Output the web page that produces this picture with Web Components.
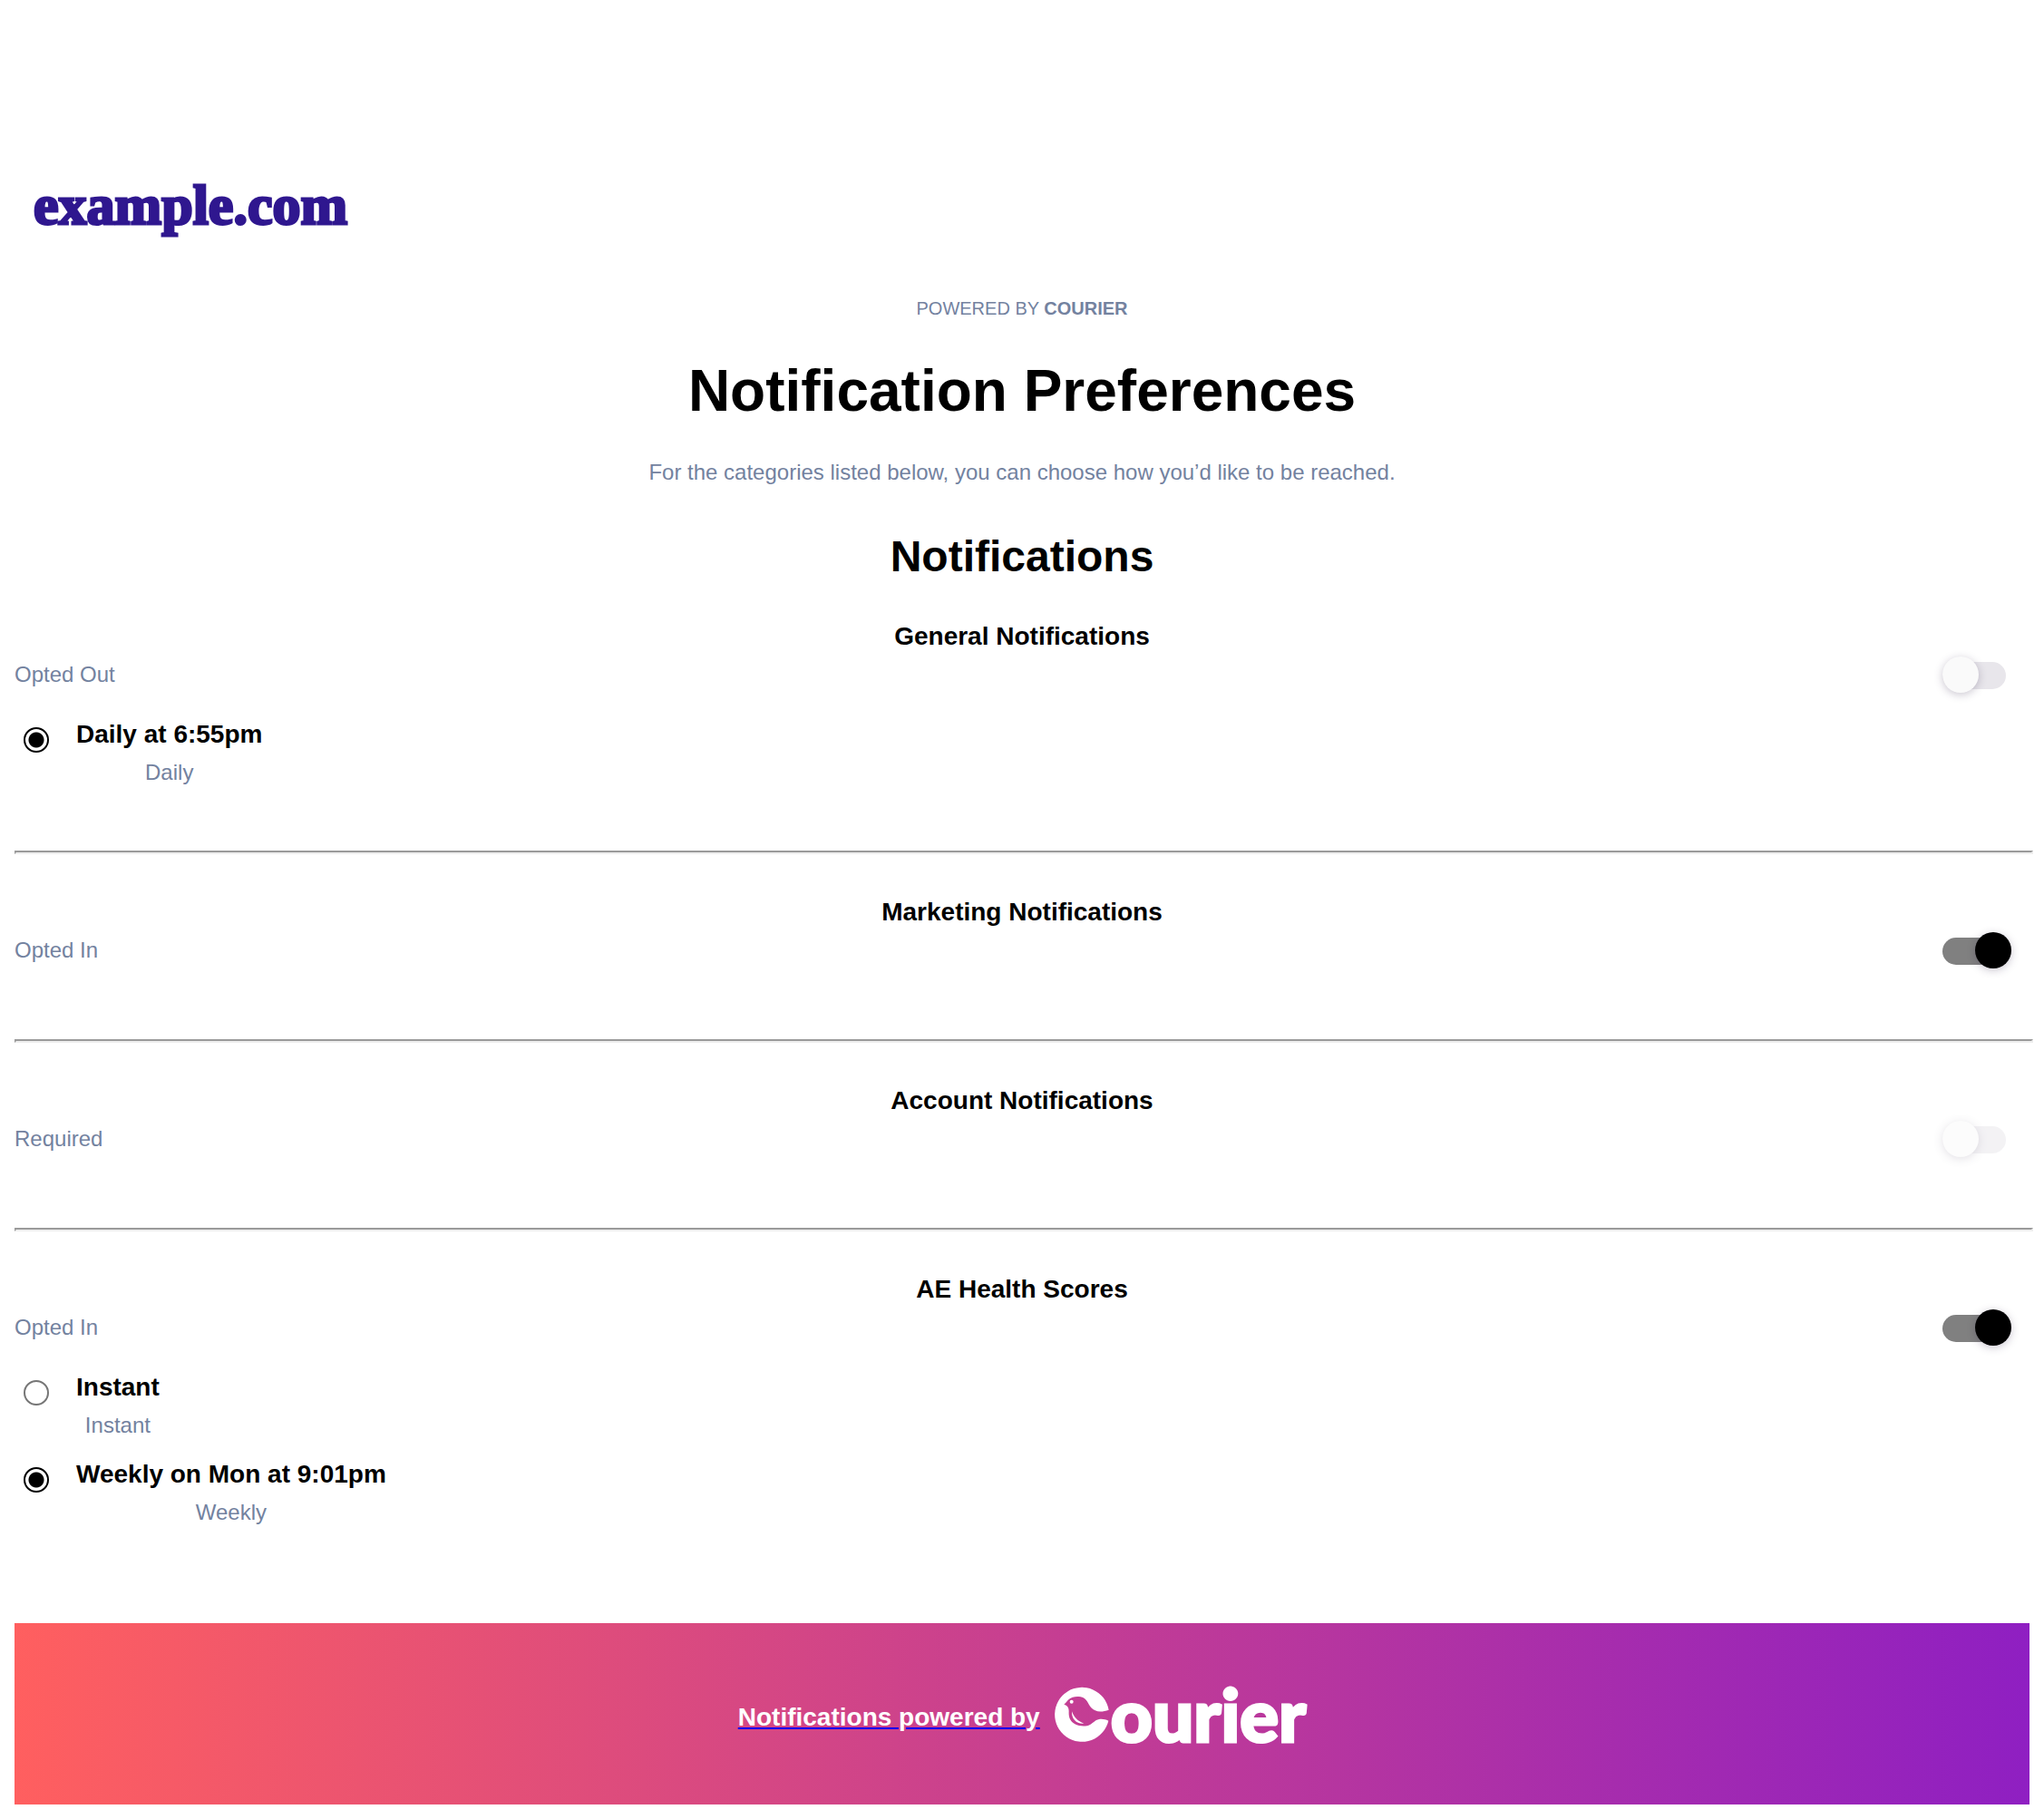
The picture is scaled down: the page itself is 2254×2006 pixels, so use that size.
<!DOCTYPE html>
<html lang="en">
<head>
<meta charset="utf-8">
<meta name="viewport" content="width=device-width, initial-scale=1">
<title>Notification Preferences</title>
<style>
  body { margin: 0; background: #fff; font-family: "Liberation Sans", Arial, sans-serif; }
</style>
</head>
<body>
<preferences-page>
  <brand-logo slot="logo">example.com</brand-logo>
  <preference-section heading="General Notifications" status="Opted Out">
    <preference-option label="Daily at 6:55pm" detail="Daily" checked></preference-option>
  </preference-section>
  <preference-section heading="Marketing Notifications" status="Opted In" on></preference-section>
  <preference-section heading="Account Notifications" status="Required" locked></preference-section>
  <preference-section heading="AE Health Scores" status="Opted In" on>
    <preference-option label="Instant" detail="Instant"></preference-option>
    <preference-option label="Weekly on Mon at 9:01pm" detail="Weekly" checked></preference-option>
  </preference-section>
  <courier-banner slot="footer">Notifications powered by</courier-banner>
</preferences-page>

<script>
const mount = (host, html) => {
  const root = host.attachShadow({ mode: "open" });
  root.innerHTML = html;
  return root;
};

customElements.define("preferences-page", class extends HTMLElement {
  constructor() {
    super();
    mount(this, `
      <style>
        :host { display: block; padding: 192px 16px 16px; --muted: #73829f; }
        header { display: flex; flex-direction: column; align-items: center; text-align: center; }
        p, h1, h2 { margin: 0; }
        .powered { color: var(--muted); font-size: 20px; line-height: 24px; margin-top: 68px; }
        h1 { font-size: 64px; line-height: 72px; margin-top: 43px; }
        .intro { color: var(--muted); font-size: 24px; line-height: 28px; margin-top: 40px; }
        h2 { font-size: 48px; line-height: 56px; margin: 51px 0 44px; }
        footer { margin-top: 36px; }
      </style>
      <slot name="logo"></slot>
      <header>
        <p class="powered">POWERED BY <b>COURIER</b></p>
        <h1>Notification Preferences</h1>
        <p class="intro">For the categories listed below, you can choose how you’d like to be reached.</p>
        <h2>Notifications</h2>
      </header>
      <main><slot></slot></main>
      <footer><slot name="footer"></slot></footer>`);
  }
});

customElements.define("brand-logo", class extends HTMLElement {
  constructor() {
    super();
    mount(this, `
      <style>
        :host { display: block; padding-left: 21px; color: #2f178f;
          font: bold 62px/68px "Liberation Serif", "Times New Roman", serif;
          -webkit-text-stroke: 3px #2f178f; stroke-linejoin: round; }
      </style>
      <slot></slot>`);
  }
});

customElements.define("toggle-switch", class extends HTMLElement {
  constructor() {
    super();
    const root = mount(this, `
      <style>
        :host { display: block; }
        input { appearance: none; display: flex; align-items: center; margin: 0; width: 76px; height: 40px; cursor: pointer; }
        input::before { content: ""; width: 70px; height: 30px; border-radius: 15px; background: #e8e6eb; margin-top: 2px; }
        input::after { content: ""; flex: none; width: 40px; height: 40px; border-radius: 50%; background: #fafafa;
          margin-left: -70px; box-shadow: 0 2px 10px rgba(50, 35, 75, .26); }
        input:checked::before { background: #808080; }
        input:checked::after { background: #000; margin-left: -34px; }
        input:disabled { opacity: .5; cursor: default; }
      </style>
      <input type="checkbox" role="switch">`);
    const input = root.querySelector("input");
    input.checked = this.hasAttribute("on");
    input.disabled = this.hasAttribute("locked");
    input.setAttribute("aria-label", this.getAttribute("label"));
  }
});

customElements.define("preference-option", class extends HTMLElement {
  constructor() {
    super();
    const root = mount(this, `
      <style>
        :host { display: flex; align-items: flex-start; }
        input { appearance: none; box-sizing: border-box; width: 28px; height: 28px; margin: 8px 30px 0 10px;
          border: 2px solid #767676; border-radius: 50%; background: #fff; }
        input:checked { border-color: #000; background: radial-gradient(circle, #000 8px, #fff 9px); }
        label { display: flex; flex-direction: column; gap: 12px; text-align: center; }
        .name { font-size: 28px; line-height: 32px; font-weight: bold; }
        .detail { font-size: 24px; line-height: 28px; color: var(--muted); }
      </style>
      <input type="radio" id="choice">
      <label for="choice"><span class="name"></span><span class="detail"></span></label>`);
    root.querySelector(".name").textContent = this.getAttribute("label");
    root.querySelector(".detail").textContent = this.getAttribute("detail");
    this.input = root.querySelector("input");
    this.input.checked = this.hasAttribute("checked");
    this.input.addEventListener("change", () => {
      for (const other of this.parentElement.querySelectorAll("preference-option"))
        if (other !== this) other.input.checked = false;
    });
  }
});

customElements.define("preference-section", class extends HTMLElement {
  constructor() {
    super();
    const heading = this.getAttribute("heading");
    const flags = ["on", "locked"].filter(f => this.hasAttribute(f)).join(" ");
    mount(this, `
      <style>
        :host { display: block; }
        section { padding-bottom: 72px; }
        h3 { margin: 0 0 6px; font-size: 28px; line-height: 32px; text-align: center; }
        .row { display: flex; align-items: center; justify-content: space-between; height: 40px; margin-bottom: 6px; padding-right: 20px; }
        .status { font-size: 24px; line-height: 28px; color: var(--muted); }
        .options { display: flex; flex-direction: column; }
        ::slotted(preference-option) { margin-top: 24px; }
        hr { width: 100%; margin: 0 0 48px; border: 2px solid; border-color: #9a9a9a #eee #eee #9a9a9a; }
        :host(:nth-last-child(2)) hr { display: none; }
      </style>
      <section>
        <h3>${heading}</h3>
        <div class="row"><span class="status">${this.getAttribute("status")}</span>
          <toggle-switch label="${heading}" ${flags}></toggle-switch></div>
        <div class="options"><slot></slot></div>
      </section>
      <hr>`);
  }
});

customElements.define("courier-banner", class extends HTMLElement {
  constructor() {
    super();
    mount(this, `
      <style>
        :host { display: flex; align-items: center; justify-content: center; height: 200px;
          background: linear-gradient(90deg, #ff5f5f, #8f1fc2); }
        a { display: flex; align-items: center; gap: 16px; color: #00e; text-decoration: none; }
        .text { font-size: 28px; line-height: 32px; font-weight: bold; color: #fff; margin-top: 8px;
          text-decoration: underline 2px #00e; text-underline-offset: 2px; }
        .mark { display: flex; align-items: center; gap: 2px; color: #fff; }
        svg { width: 60px; height: 62px; }
        .word { font: 900 80px/62px Lato, Inter, sans-serif; -webkit-text-stroke: 3px #fff; }
      </style>
      <a href="#courier">
        <span class="text"><slot></slot></span>
        <span class="mark">
          <svg viewBox="94 91 180 186" aria-hidden="true" fill="#fff">
            <path d="M273 171A90 90 0 1 0 272 207C262 202 250 200 241 202C227 205 222 214 211 220C198 227 176 226 161 218C143 208 140 192 141 176C141 165 138 157 125 153C132 148 134 142 141 136C151 127 168 125 180 128C203 133 203 151 215 164C227 178 249 180 273 171Z"/>
            <circle cx="150" cy="144" r="6"/>
            <path d="M151 176C157 194 170 209 191 216C169 219 149 203 151 176Z"/>
          </svg>
          <span class="word">ourier</span>
        </span>
      </a>`);
  }
});
</script>
</body>
</html>
